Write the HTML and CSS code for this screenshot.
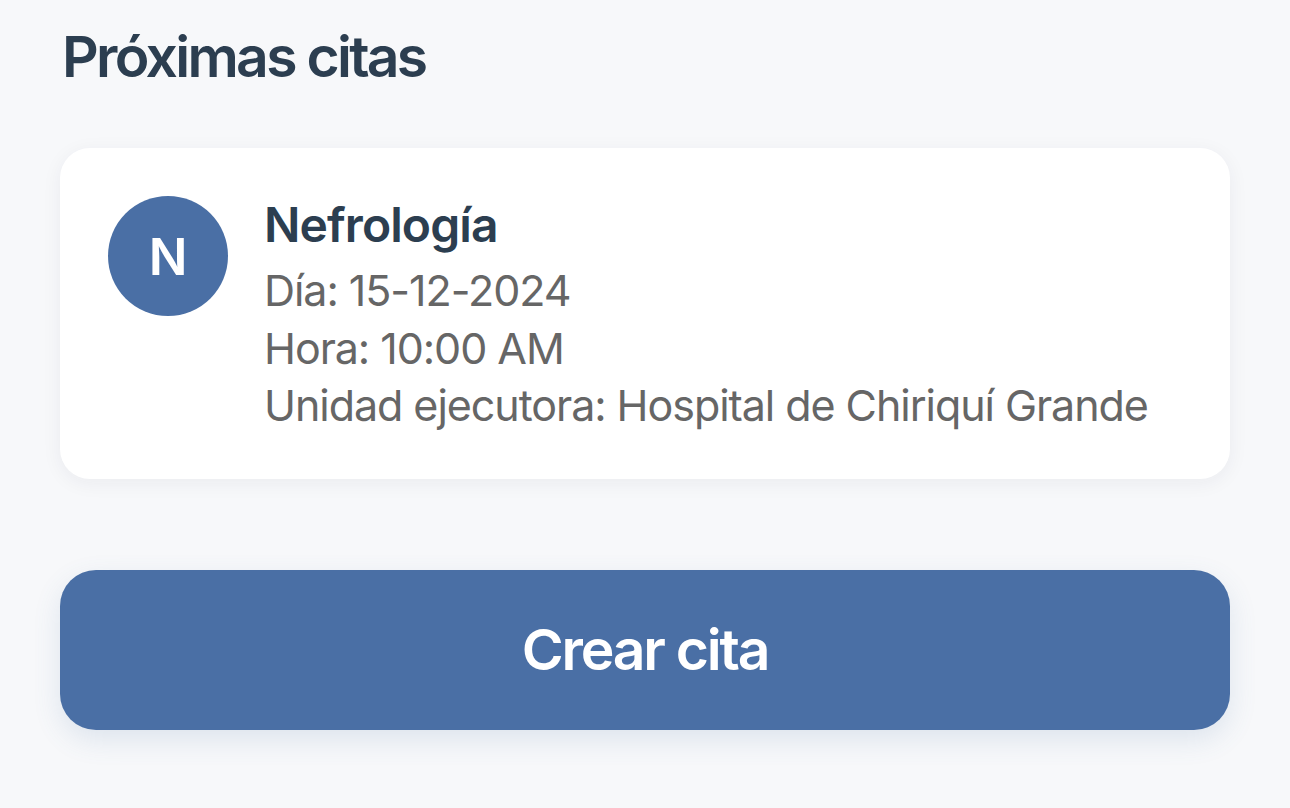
FILE: index.html
```html
<!DOCTYPE html>
<html lang="es">
<head>
<meta charset="utf-8">
<title>Próximas citas</title>
<link rel="stylesheet" href="styles.css">
</head>
<body>
<main class="page">
  <h1 class="title">Próximas citas</h1>
  <section class="card">
    <div class="avatar">N</div>
    <div class="info">
      <h2 class="specialty">Nefrología</h2>
      <p class="line">Día: 15-12-2024</p>
      <p class="line">Hora: 10:00 AM</p>
      <p class="line">Unidad ejecutora: Hospital de Chiriquí Grande</p>
    </div>
  </section>
  <button class="create">Crear cita</button>
</main>
</body>
</html>
```
FILE: styles.css
```css
html, body {
  margin: 0;
  padding: 0;
  background: #f7f8fa;
}
body {
  font-family: Inter, "Noto Sans", "Liberation Sans", sans-serif;
  width: 1290px;
  height: 808px;
  overflow: hidden;
}
.page {
  padding: 21px 60px 0 60px;
  display: flex;
  flex-direction: column;
}
.title {
  margin: 0 0 55px 2px;
  font-size: 57px;
  line-height: 72px;
  font-weight: 600;
  color: #2c3e50;
  letter-spacing: -2.7px;
}
.card {
  background: #ffffff;
  border-radius: 30px;
  box-shadow: 0 4px 20px rgba(30, 40, 60, 0.06);
  padding: 48px 48px 44px 48px;
  display: flex;
  gap: 36px;
  align-items: flex-start;
}
.avatar {
  width: 120px;
  height: 120px;
  flex: none;
  border-radius: 50%;
  background: #4a6fa5;
  color: #ffffff;
  font-size: 51px;
  font-weight: 600;
  display: flex;
  align-items: center;
  justify-content: center;
}
.info {
  display: flex;
  flex-direction: column;
  white-space: nowrap;
}
.specialty {
  margin: 0 0 8px 0;
  font-size: 48px;
  line-height: 58px;
  font-weight: 600;
  color: #2c3e50;
  letter-spacing: -0.9px;
}
.line {
  margin: 0;
  font-size: 43px;
  line-height: 57.5px;
  font-weight: 400;
  color: #666666;
  letter-spacing: -1.05px;
}
.create {
  margin-top: 91px;
  height: 160px;
  border: none;
  border-radius: 36px;
  background: #4a6fa5;
  color: #ffffff;
  font-family: inherit;
  font-size: 57px;
  font-weight: 600;
  letter-spacing: -2.2px;
  box-shadow: 0 10px 28px rgba(74, 111, 165, 0.14);
}
```
